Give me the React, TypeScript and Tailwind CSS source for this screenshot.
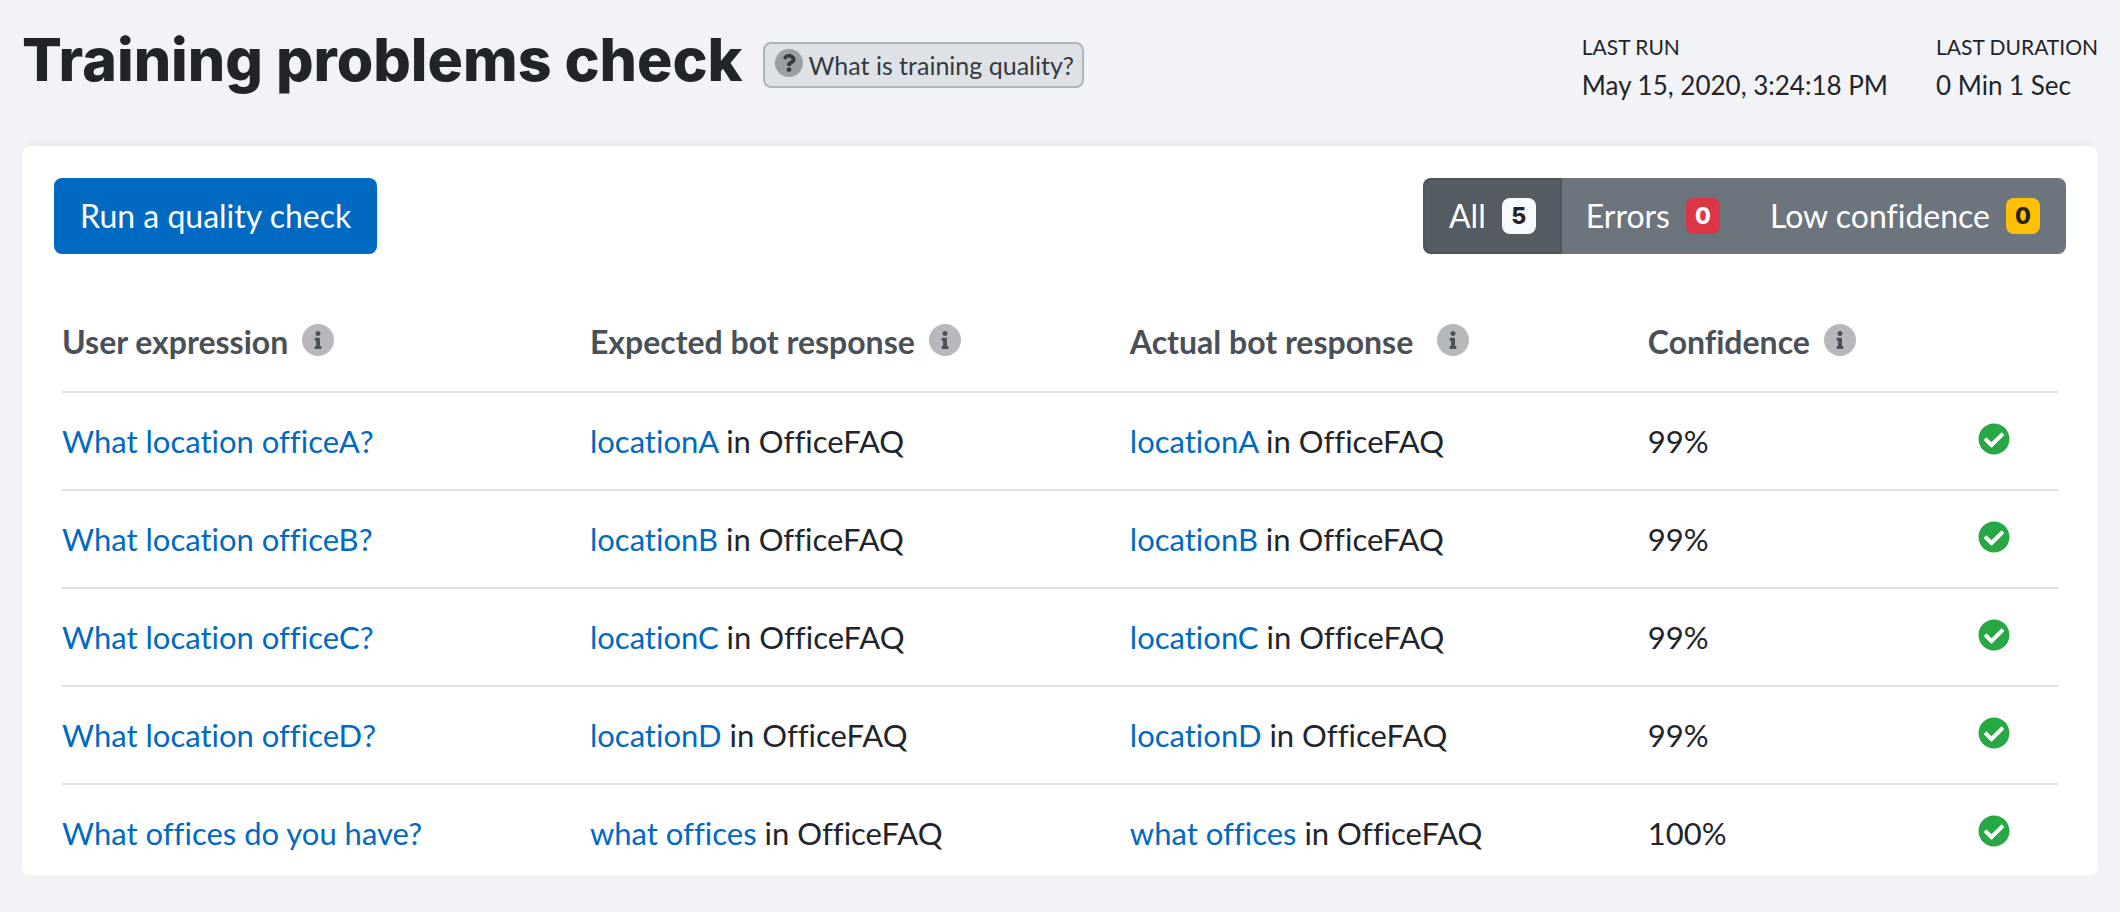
import React, { useState } from 'react';
import { FaCheckCircle, FaInfo, FaQuestion } from 'react-icons/fa';

type Filter = 'all' | 'errors' | 'low';

interface CheckRow {
  expression: string;
  expected: string;
  actual: string;
  bot: string;
  confidence: number;
}

const rows: CheckRow[] = [
  { expression: 'What location officeA?', expected: 'locationA', actual: 'locationA', bot: 'OfficeFAQ', confidence: 99 },
  { expression: 'What location officeB?', expected: 'locationB', actual: 'locationB', bot: 'OfficeFAQ', confidence: 99 },
  { expression: 'What location officeC?', expected: 'locationC', actual: 'locationC', bot: 'OfficeFAQ', confidence: 99 },
  { expression: 'What location officeD?', expected: 'locationD', actual: 'locationD', bot: 'OfficeFAQ', confidence: 99 },
  { expression: 'What offices do you have?', expected: 'what offices', actual: 'what offices', bot: 'OfficeFAQ', confidence: 100 },
];

const filters: { id: Filter; label: string; count: number; badge: string }[] = [
  { id: 'all', label: 'All', count: 5, badge: 'bg-[#f8f9fa] text-[#212529]' },
  { id: 'errors', label: 'Errors', count: 0, badge: 'bg-[#dc3545] text-white' },
  { id: 'low', label: 'Low confidence', count: 0, badge: 'bg-[#ffc107] text-[#212529]' },
];

const InfoIcon: React.FC = () => (
  <span className="mb-1 inline-flex size-8 shrink-0 items-center justify-center rounded-full bg-[#b6b8bc] text-[#495057]">
    <FaInfo size={18} />
  </span>
);

const HeaderCell: React.FC<{ label: string; wide?: boolean }> = ({ label, wide }) => (
  <th scope="col" className="p-0 pb-[25px] text-left font-bold">
    <span className={`flex items-center ${wide ? 'gap-6' : 'gap-3.5'}`}>
      {label}
      <InfoIcon />
    </span>
  </th>
);

const Response: React.FC<{ name: string; bot: string }> = ({ name, bot }) => (
  <>
    <a href="#" className="text-[#0069c2] hover:underline">{name}</a> in {bot}
  </>
);

export default function App() {
  const [active, setActive] = useState<Filter>('all');

  return (
    <div className="min-h-screen bg-[#f1f3f7] px-[22px] pt-7 pb-9 font-['Lato','Liberation_Sans',sans-serif] text-[32px] leading-[48px] text-[#212529] [font-variant-ligatures:no-common-ligatures]">
      {/* Page header */}
      <header className="mb-[42px] flex items-start justify-between">
        <div className="flex items-center gap-5">
          <h1 className="font-['Inter',sans-serif] text-[59px] leading-[64px] font-extrabold">Training problems check</h1>
          <button
            type="button"
            className="mt-2.5 flex items-center gap-1.5 rounded-lg border-2 border-[#adb5bd] bg-[#dee2e6] px-2 pl-2.5 text-[25px] leading-[42px] text-[#343a40]"
          >
            <span className="mb-1 flex size-7 items-center justify-center rounded-full bg-[#9b9fa5]">
              <FaQuestion size={18} />
            </span>
            What is training quality?
          </button>
        </div>

        <dl className="flex gap-12">
          <div>
            <dt className="text-[21px] leading-[38px]">LAST RUN</dt>
            <dd className="text-[26px] leading-[38px]">May 15, 2020, 3:24:18 PM</dd>
          </div>
          <div>
            <dt className="text-[21px] leading-[38px]">LAST DURATION</dt>
            <dd className="text-[26px] leading-[38px]">0 Min 1 Sec</dd>
          </div>
        </dl>
      </header>

      {/* Results card */}
      <main className="rounded-lg bg-white px-8 pt-8 shadow-[0_-4px_8px_-4px_rgba(60,60,100,0.1)]">
        <div className="flex items-center justify-between">
          <button type="button" className="h-[76px] rounded-lg bg-[#0069c2] px-[26px] text-white">
            Run a quality check
          </button>

          <div className="flex overflow-hidden rounded-lg bg-[#6c757d] text-white">
            {filters.map((f) => (
              <button
                key={f.id}
                type="button"
                aria-pressed={active === f.id}
                onClick={() => setActive(f.id)}
                className={`-ml-0.5 flex h-[76px] items-center gap-4 border-2 px-6 first:ml-0 ${
                  active === f.id ? 'border-[#4e555b] bg-[#545b62] first:rounded-l-lg' : 'border-transparent'
                }`}
              >
                {f.label}
                <span className={`flex h-9 w-[34px] items-center justify-center rounded-lg font-['Inter',sans-serif] text-[23px] font-extrabold ${f.badge}`}>
                  {f.count}
                </span>
              </button>
            ))}
          </div>
        </div>

        <div className="mt-16 px-2">
          <table className="w-full table-fixed border-collapse">
            <colgroup>
              <col className="w-[26.45%]" />
              <col className="w-[27.05%]" />
              <col className="w-[25.95%]" />
              <col />
            </colgroup>
            <thead className="text-[#495057]">
              <tr>
                <HeaderCell label="User expression" />
                <HeaderCell label="Expected bot response" />
                <HeaderCell label="Actual bot response" wide />
                <HeaderCell label="Confidence" />
              </tr>
            </thead>
            <tbody className="text-[31px]">
              {rows.map((row) => (
                <tr key={row.expression} className="border-t-2 border-[#dee2e6] last:[&>td]:pb-[18px]">
                  <td className="py-6">
                    <a href="#" className="text-[#0069c2] hover:underline">{row.expression}</a>
                  </td>
                  <td className="py-6"><Response name={row.expected} bot={row.bot} /></td>
                  <td className="py-6"><Response name={row.actual} bot={row.bot} /></td>
                  <td className="py-6">
                    <div className="flex items-center justify-between pr-12">
                      {row.confidence}%
                      <FaCheckCircle size={32} className="mb-1 text-[#28a745]" />
                    </div>
                  </td>
                </tr>
              ))}
            </tbody>
          </table>
        </div>
      </main>
    </div>
  );
}
